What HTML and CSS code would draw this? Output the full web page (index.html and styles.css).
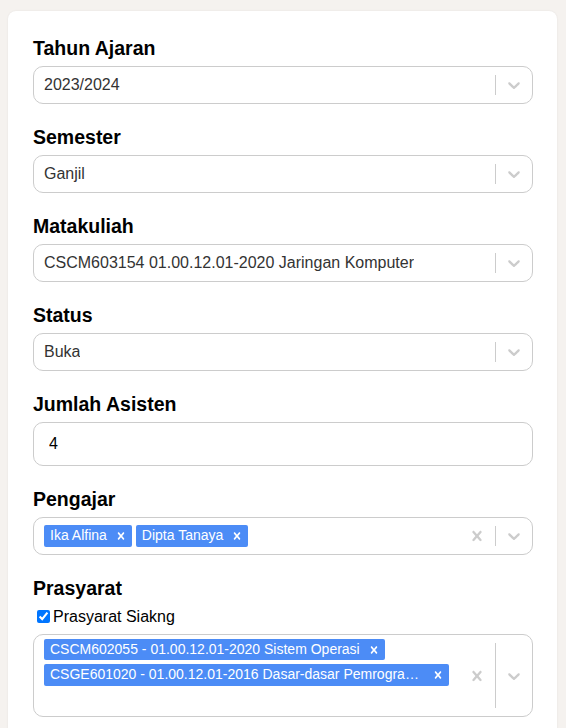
FILE: index.html
```html
<!DOCTYPE html>
<html lang="id">
<head>
<meta charset="utf-8">
<title>Form Lowongan</title>
<link rel="stylesheet" href="styles.css">
</head>
<body>
<div class="card">
  <div class="field">
    <div class="label">Tahun Ajaran</div>
    <div class="select">
      <div class="value"><span class="single">2023/2024</span></div>
      <div class="indicators">
        <span class="sep"></span>
        <span class="ind"><svg viewBox="0 0 20 20" width="20" height="20"><path d="M4.516 7.548c0.436-0.446 1.043-0.481 1.576 0l3.908 3.747 3.908-3.747c0.533-0.481 1.141-0.446 1.574 0 0.436 0.445 0.408 1.197 0 1.615-0.406 0.418-4.695 4.502-4.695 4.502-0.217 0.223-0.502 0.335-0.787 0.335s-0.57-0.112-0.789-0.335c0 0-4.287-4.084-4.695-4.502s-0.436-1.17 0-1.615z"/></svg></span>
      </div>
    </div>
  </div>

  <div class="field">
    <div class="label">Semester</div>
    <div class="select">
      <div class="value"><span class="single">Ganjil</span></div>
      <div class="indicators">
        <span class="sep"></span>
        <span class="ind"><svg viewBox="0 0 20 20" width="20" height="20"><path d="M4.516 7.548c0.436-0.446 1.043-0.481 1.576 0l3.908 3.747 3.908-3.747c0.533-0.481 1.141-0.446 1.574 0 0.436 0.445 0.408 1.197 0 1.615-0.406 0.418-4.695 4.502-4.695 4.502-0.217 0.223-0.502 0.335-0.787 0.335s-0.57-0.112-0.789-0.335c0 0-4.287-4.084-4.695-4.502s-0.436-1.17 0-1.615z"/></svg></span>
      </div>
    </div>
  </div>

  <div class="field">
    <div class="label">Matakuliah</div>
    <div class="select">
      <div class="value"><span class="single">CSCM603154 01.00.12.01-2020 Jaringan Komputer</span></div>
      <div class="indicators">
        <span class="sep"></span>
        <span class="ind"><svg viewBox="0 0 20 20" width="20" height="20"><path d="M4.516 7.548c0.436-0.446 1.043-0.481 1.576 0l3.908 3.747 3.908-3.747c0.533-0.481 1.141-0.446 1.574 0 0.436 0.445 0.408 1.197 0 1.615-0.406 0.418-4.695 4.502-4.695 4.502-0.217 0.223-0.502 0.335-0.787 0.335s-0.57-0.112-0.789-0.335c0 0-4.287-4.084-4.695-4.502s-0.436-1.17 0-1.615z"/></svg></span>
      </div>
    </div>
  </div>

  <div class="field">
    <div class="label">Status</div>
    <div class="select">
      <div class="value"><span class="single">Buka</span></div>
      <div class="indicators">
        <span class="sep"></span>
        <span class="ind"><svg viewBox="0 0 20 20" width="20" height="20"><path d="M4.516 7.548c0.436-0.446 1.043-0.481 1.576 0l3.908 3.747 3.908-3.747c0.533-0.481 1.141-0.446 1.574 0 0.436 0.445 0.408 1.197 0 1.615-0.406 0.418-4.695 4.502-4.695 4.502-0.217 0.223-0.502 0.335-0.787 0.335s-0.57-0.112-0.789-0.335c0 0-4.287-4.084-4.695-4.502s-0.436-1.17 0-1.615z"/></svg></span>
      </div>
    </div>
  </div>

  <div class="field">
    <div class="label">Jumlah Asisten</div>
    <input class="text-input" type="number" value="4">
  </div>

  <div class="field">
    <div class="label">Pengajar</div>
    <div class="select">
      <div class="value multi">
        <div class="tag">
          <span class="tag-label">Ika Alfina</span>
          <span class="tag-remove"><svg viewBox="0 0 20 20" width="14" height="14"><path d="M14.348 14.849c-0.469 0.469-1.229 0.469-1.697 0l-2.651-3.030-2.651 3.029c-0.469 0.469-1.229 0.469-1.697 0-0.469-0.469-0.469-1.229 0-1.697l2.758-3.15-2.759-3.152c-0.469-0.469-0.469-1.228 0-1.697s1.228-0.469 1.697 0l2.652 3.031 2.651-3.031c0.469-0.469 1.228-0.469 1.697 0s0.469 1.229 0 1.697l-2.758 3.152 2.758 3.15c0.469 0.469 0.469 1.229 0 1.698z"/></svg></span>
        </div>
        <div class="tag">
          <span class="tag-label">Dipta Tanaya</span>
          <span class="tag-remove"><svg viewBox="0 0 20 20" width="14" height="14"><path d="M14.348 14.849c-0.469 0.469-1.229 0.469-1.697 0l-2.651-3.030-2.651 3.029c-0.469 0.469-1.229 0.469-1.697 0-0.469-0.469-0.469-1.229 0-1.697l2.758-3.15-2.759-3.152c-0.469-0.469-0.469-1.228 0-1.697s1.228-0.469 1.697 0l2.652 3.031 2.651-3.031c0.469-0.469 1.228-0.469 1.697 0s0.469 1.229 0 1.697l-2.758 3.152 2.758 3.15c0.469 0.469 0.469 1.229 0 1.698z"/></svg></span>
        </div>
        <span class="input-spot"></span>
      </div>
      <div class="indicators">
        <span class="ind"><svg viewBox="0 0 20 20" width="20" height="20"><path d="M14.348 14.849c-0.469 0.469-1.229 0.469-1.697 0l-2.651-3.030-2.651 3.029c-0.469 0.469-1.229 0.469-1.697 0-0.469-0.469-0.469-1.229 0-1.697l2.758-3.15-2.759-3.152c-0.469-0.469-0.469-1.228 0-1.697s1.228-0.469 1.697 0l2.652 3.031 2.651-3.031c0.469-0.469 1.228-0.469 1.697 0s0.469 1.229 0 1.697l-2.758 3.152 2.758 3.15c0.469 0.469 0.469 1.229 0 1.698z"/></svg></span>
        <span class="sep"></span>
        <span class="ind"><svg viewBox="0 0 20 20" width="20" height="20"><path d="M4.516 7.548c0.436-0.446 1.043-0.481 1.576 0l3.908 3.747 3.908-3.747c0.533-0.481 1.141-0.446 1.574 0 0.436 0.445 0.408 1.197 0 1.615-0.406 0.418-4.695 4.502-4.695 4.502-0.217 0.223-0.502 0.335-0.787 0.335s-0.57-0.112-0.789-0.335c0 0-4.287-4.084-4.695-4.502s-0.436-1.17 0-1.615z"/></svg></span>
      </div>
    </div>
  </div>

  <div class="field">
    <div class="label">Prasyarat</div>
    <label class="check"><input type="checkbox" checked>Prasyarat Siakng</label>
    <div class="select">
      <div class="value multi">
        <div class="tag">
          <span class="tag-label">CSCM602055 - 01.00.12.01-2020 Sistem Operasi</span>
          <span class="tag-remove"><svg viewBox="0 0 20 20" width="14" height="14"><path d="M14.348 14.849c-0.469 0.469-1.229 0.469-1.697 0l-2.651-3.030-2.651 3.029c-0.469 0.469-1.229 0.469-1.697 0-0.469-0.469-0.469-1.229 0-1.697l2.758-3.15-2.759-3.152c-0.469-0.469-0.469-1.228 0-1.697s1.228-0.469 1.697 0l2.652 3.031 2.651-3.031c0.469-0.469 1.228-0.469 1.697 0s0.469 1.229 0 1.697l-2.758 3.152 2.758 3.15c0.469 0.469 0.469 1.229 0 1.698z"/></svg></span>
        </div>
        <div class="tag">
          <span class="tag-label">CSGE601020 - 01.00.12.01-2016 Dasar-dasar Pemrograman Komputer</span>
          <span class="tag-remove"><svg viewBox="0 0 20 20" width="14" height="14"><path d="M14.348 14.849c-0.469 0.469-1.229 0.469-1.697 0l-2.651-3.030-2.651 3.029c-0.469 0.469-1.229 0.469-1.697 0-0.469-0.469-0.469-1.229 0-1.697l2.758-3.15-2.759-3.152c-0.469-0.469-0.469-1.228 0-1.697s1.228-0.469 1.697 0l2.652 3.031 2.651-3.031c0.469-0.469 1.228-0.469 1.697 0s0.469 1.229 0 1.697l-2.758 3.152 2.758 3.15c0.469 0.469 0.469 1.229 0 1.698z"/></svg></span>
        </div>
        <span class="input-spot"></span>
      </div>
      <div class="indicators">
        <span class="ind"><svg viewBox="0 0 20 20" width="20" height="20"><path d="M14.348 14.849c-0.469 0.469-1.229 0.469-1.697 0l-2.651-3.030-2.651 3.029c-0.469 0.469-1.229 0.469-1.697 0-0.469-0.469-0.469-1.229 0-1.697l2.758-3.15-2.759-3.152c-0.469-0.469-0.469-1.228 0-1.697s1.228-0.469 1.697 0l2.652 3.031 2.651-3.031c0.469-0.469 1.228-0.469 1.697 0s0.469 1.229 0 1.697l-2.758 3.152 2.758 3.15c0.469 0.469 0.469 1.229 0 1.698z"/></svg></span>
        <span class="sep"></span>
        <span class="ind"><svg viewBox="0 0 20 20" width="20" height="20"><path d="M4.516 7.548c0.436-0.446 1.043-0.481 1.576 0l3.908 3.747 3.908-3.747c0.533-0.481 1.141-0.446 1.574 0 0.436 0.445 0.408 1.197 0 1.615-0.406 0.418-4.695 4.502-4.695 4.502-0.217 0.223-0.502 0.335-0.787 0.335s-0.57-0.112-0.789-0.335c0 0-4.287-4.084-4.695-4.502s-0.436-1.17 0-1.615z"/></svg></span>
      </div>
    </div>
  </div>
</div>
</body>
</html>
```

FILE: styles.css
```css
* { box-sizing: border-box; }

html, body {
  margin: 0;
  background: #f5f2ef;
}

body {
  padding: 11px 9px 0 8px;
  font-family: "Liberation Sans", Arial, sans-serif;
  font-size: 16px;
  color: #000;
}

.card {
  background: #fff;
  border-radius: 8px;
  box-shadow: 0 0 2px rgba(0, 0, 0, 0.08);
  padding: 22.5px 24px 40px 25px;
  display: flex;
  flex-direction: column;
  gap: 19px;
}

.field {
  display: flex;
  flex-direction: column;
}

.label {
  font-size: 19.5px;
  font-weight: 700;
  line-height: 28px;
  margin-bottom: 4px;
  color: #000;
}

.select {
  display: flex;
  align-items: stretch;
  min-height: 38px;
  border: 1px solid #cccccc;
  border-radius: 10px;
  background: #fff;
}

.value {
  flex: 1;
  min-width: 0;
  display: flex;
  align-items: center;
  padding: 2px 8px;
  overflow: hidden;
}

.single {
  margin: 0 2px;
  color: #333333;
  white-space: nowrap;
  overflow: hidden;
  text-overflow: ellipsis;
  line-height: 18px;
}

.multi {
  flex-wrap: wrap;
}

.tag {
  display: flex;
  min-width: 0;
  margin: 2px;
  background: #4c8cf6;
  border-radius: 2px;
}

.tag-label {
  padding: 3px 3px 3px 6px;
  font-size: 14px;
  line-height: 15.4px;
  color: #fff;
  white-space: nowrap;
  overflow: hidden;
  text-overflow: ellipsis;
}

.tag-remove {
  display: flex;
  align-items: center;
  padding: 0 4px;
  fill: #fff;
}

.input-spot {
  display: block;
  width: 2px;
  height: 18.4px;
  margin: 2px;
  padding: 2px 0;
  box-sizing: content-box;
}

.indicators {
  display: flex;
  align-items: center;
  flex-shrink: 0;
}

.sep {
  align-self: stretch;
  width: 1px;
  margin: 8px 0;
  background: #cccccc;
}

.ind {
  display: flex;
  padding: 8px;
  fill: #cccccc;
}

.text-input {
  height: 44.5px;
  border: 1px solid #cccccc;
  border-radius: 10px;
  padding: 0 15px;
  font-family: "Liberation Sans", Arial, sans-serif;
  font-size: 16px;
  color: #000;
  background: #fff;
  outline: none;
  appearance: textfield;
  -moz-appearance: textfield;
}

.text-input::-webkit-outer-spin-button,
.text-input::-webkit-inner-spin-button {
  -webkit-appearance: none;
  margin: 0;
}

.check {
  display: flex;
  align-items: center;
  line-height: 24px;
  margin: -1.5px 0 5.5px;
  font-size: 16px;
  color: #000;
}

.check input {
  margin: 3px 3px 3px 4px;
  width: 13px;
  height: 13px;
}
```
